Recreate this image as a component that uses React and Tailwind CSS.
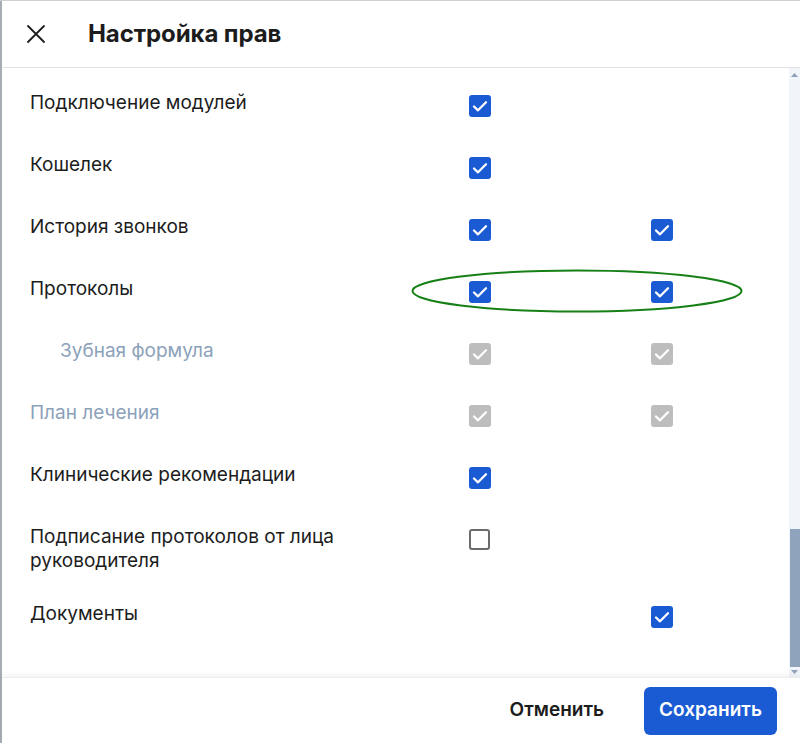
import React from "react";

function Check({ state }) {
  if (state === "off") {
    return <div className="w-[21px] h-[21px] rounded-[3px] border-2 border-[#6b6b6b] bg-white" />;
  }
  const bg = state === "disabled" ? "bg-[#bdbdbd]" : "bg-[#1a5bd4]";
  return (
    <div className={`w-[22px] h-[22px] rounded-[3px] ${bg} flex items-center justify-center`}>
      <svg width="22" height="22" viewBox="0 0 22 22" fill="none">
        <path d="M5 11.5l4 3.8L17 7.2" stroke="white" strokeWidth="2.3" strokeLinecap="round" strokeLinejoin="round" />
      </svg>
    </div>
  );
}

const rows = [
  { label: "Подключение модулей", a: "on", b: null },
  { label: "Кошелек", a: "on", b: null },
  { label: "История звонков", a: "on", b: "on" },
  { label: "Протоколы", a: "on", b: "on" },
  { label: "Зубная формула", a: "disabled", b: "disabled", indent: true, muted: true },
  { label: "План лечения", a: "disabled", b: "disabled", muted: true },
  { label: "Клинические рекомендации", a: "on", b: null },
  { label: "Подписание протоколов от лица руководителя", a: "off", b: null, tall: true },
  { label: "Документы", a: null, b: "on" },
];

export default function App() {
  return (
    <div
      className="w-[800px] h-[743px] bg-white flex overflow-hidden border-t border-[#cfcfcf]"
      style={{ fontFamily: "Inter, 'Noto Sans', sans-serif" }}
    >
      <div className="w-[2px] bg-[#a8adb3] shrink-0" />
      <div className="flex-1 flex flex-col min-w-0">
        <div className="h-[67px] shrink-0 flex items-center border-b border-[#e3e3e3]">
          <div className="w-[86px] pl-[24px] flex items-center">
            <svg width="20" height="20" viewBox="0 0 20 20" fill="none">
              <path d="M2 2l16 16M18 2L2 18" stroke="#1c1c1c" strokeWidth="1.8" strokeLinecap="round" />
            </svg>
          </div>
          <div className="text-[24px] font-bold text-[#1c1c1c] tracking-[-0.1px]">Настройка прав</div>
        </div>
        <div className="flex-1 flex min-h-0">
          <div className="flex-1 relative">
            {rows.map((r, i) => (
              <div
                key={i}
                className={`flex items-start pt-[23px] ${r.tall ? "h-[77px]" : "h-[62px]"}`}
              >
                <div
                  className={`w-[467px] shrink-0 text-[19px] leading-[24px] ${r.indent ? "pl-[58px]" : "pl-[28px]"} ${r.muted ? "text-[#8ca1ba]" : "text-[#1c1c1c]"}`}
                >
                  {r.tall ? (
                    <>
                      Подписание протоколов от лица
                      <br />
                      руководителя
                    </>
                  ) : (
                    r.label
                  )}
                </div>
                <div className="w-[182px] shrink-0 pt-[4px]">{r.a && <Check state={r.a} />}</div>
                <div className="pt-[4px]">{r.b && <Check state={r.b} />}</div>
              </div>
            ))}
            <svg className="absolute left-[408px] top-[200px]" width="334" height="46" viewBox="0 0 334 46" fill="none">
              <ellipse cx="167" cy="23" rx="164.5" ry="20.5" stroke="#168016" strokeWidth="2" />
            </svg>
          </div>
          <div className="w-[11px] shrink-0 bg-[#f1f4f9] flex flex-col items-center">
            <div className="h-[14px] flex items-center justify-center">
              <svg width="7" height="4" viewBox="0 0 7 4"><path d="M0 4L3.5 0L7 4Z" fill="#8fa2bb" /></svg>
            </div>
            <div className="flex-1" />
            <div className="w-[10px] h-[138px] bg-[#8fa3bd]" />
            <div className="h-[10px] flex items-center justify-center">
              <svg width="7" height="4" viewBox="0 0 7 4"><path d="M0 0L3.5 4L7 0Z" fill="#8fa2bb" /></svg>
            </div>
          </div>
        </div>
        <div className="h-[66px] shrink-0 flex items-center justify-end pr-[23px] gap-[40px] shadow-[0_-2px_6px_rgba(0,0,0,0.06)] border-t border-[#eeeeee] relative">
          <div className="text-[19px] font-semibold text-[#1c1c1c]">Отменить</div>
          <div className="w-[133px] h-[48px] rounded-[6px] bg-[#1a5bd4] flex items-center justify-center text-white text-[19px] font-semibold">
            Сохранить
          </div>
        </div>
      </div>
    </div>
  );
}
